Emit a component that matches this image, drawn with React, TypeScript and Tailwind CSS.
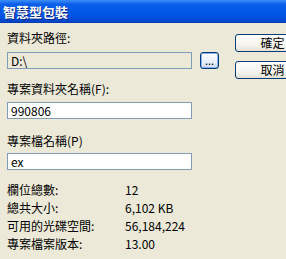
export default function App() {
  const stats = [
    { label: "欄位總數:", value: "12" },
    { label: "總共大小:", value: "6,102 KB" },
    { label: "可用的光碟空間:", value: "56,184,224" },
    { label: "專案檔案版本:", value: "13.00" },
  ];

  return (
    <div className="w-[286px] h-[259px] overflow-hidden bg-[#ECE9D8] text-[12px] text-black font-['Noto_Sans_CJK_TC',sans-serif]">
      {/* Title bar */}
      <div className="h-[23px] flex items-center pl-[3px] bg-[linear-gradient(180deg,#3d8ef7_0%,#0b5fea_18%,#0055e5_65%,#0046cf_92%,#003aa8_100%)]">
        <span className="text-white font-bold text-[13px] leading-none [text-shadow:1px_1px_0_#0a2580]">智慧型包裝</span>
      </div>

      <div className="flex">
        {/* Left column */}
        <div className="w-[228px] pl-[7px] shrink-0">
          <div className="mt-[7px] h-4 leading-4">資料夾路徑:</div>
          <div className="mt-[6px] flex items-center gap-[8px]">
            <div className="w-[185px] h-[17px] border border-[#7F9DB9] bg-[#ECE9D8] px-[3px] leading-[15px]">D:\</div>
            <button className="w-[19px] h-[17px] rounded-[3px] border border-[#003C74] bg-[linear-gradient(180deg,#ffffff_0%,#e8eefc_60%,#cdd9f5_100%)] shadow-[inset_0_0_0_1px_#8cb0f8] flex items-end justify-center pb-[2px] leading-none text-[11px]">
              ...
            </button>
          </div>

          <div className="mt-[12px] h-4 leading-4">專案資料夾名稱(F):</div>
          <div className="mt-[5px] w-[185px] h-[17px] border border-[#7F9DB9] bg-white px-[3px] leading-[15px]">990806</div>

          <div className="mt-[14px] h-4 leading-4">專案檔名稱(P)</div>
          <div className="mt-[4px] w-[185px] h-[17px] border border-[#7F9DB9] bg-white px-[3px] leading-[15px]">ex</div>

          <div className="mt-[11px] grid grid-cols-[118px_1fr]">
            {stats.map((s) => (
              <div key={s.label} className="contents">
                <div className="h-[18px] leading-[18px]">{s.label}</div>
                <div className="h-[18px] leading-[18px]">{s.value}</div>
              </div>
            ))}
          </div>
        </div>

        {/* Right column */}
        <div className="pl-[7px] pt-[11px] flex flex-col gap-[9px]">
          <button className="w-[75px] h-[18px] shrink-0 rounded-[3px] border border-[#003C74] bg-[linear-gradient(180deg,#ffffff_0%,#f5f4ee_60%,#e3e1d6_100%)] leading-none">
            確定
          </button>
          <button className="w-[75px] h-[18px] shrink-0 rounded-[3px] border border-[#003C74] bg-[linear-gradient(180deg,#ffffff_0%,#f5f4ee_60%,#e3e1d6_100%)] leading-none">
            取消
          </button>
        </div>
      </div>
    </div>
  );
}
